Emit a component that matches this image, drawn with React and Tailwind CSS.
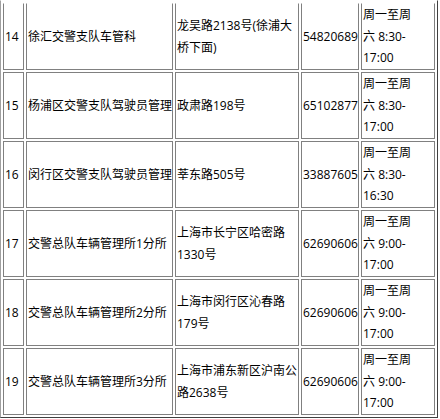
import React from "react";

const rows = [
  { no: "14", name: "徐汇交警支队车管科", addr: ["龙吴路2138号(徐浦大", "桥下面)"], tel: "54820689", time: "8:30-", end: "17:00" },
  { no: "15", name: "杨浦区交警支队驾驶员管理", addr: ["政肃路198号"], tel: "65102877", time: "8:30-", end: "17:00" },
  { no: "16", name: "闵行区交警支队驾驶员管理", addr: ["莘东路505号"], tel: "33887605", time: "8:30-", end: "16:30" },
  { no: "17", name: "交警总队车辆管理所1分所", addr: ["上海市长宁区哈密路", "1330号"], tel: "62690606", time: "9:00-", end: "17:00" },
  { no: "18", name: "交警总队车辆管理所2分所", addr: ["上海市闵行区沁春路", "179号"], tel: "62690606", time: "9:00-", end: "17:00" },
  { no: "19", name: "交警总队车辆管理所3分所", addr: ["上海市浦东新区沪南公", "路2638号"], tel: "62690606", time: "9:00-", end: "17:00" },
];

const Cell = ({ first, className = "", children }) => (
  <td
    className={`border border-[#808080] ${first ? "border-t-transparent" : ""} px-px py-0 align-middle whitespace-nowrap overflow-hidden ${className}`}
  >
    {children}
  </td>
);

export default function App() {
  return (
    <div className="w-[440px] h-[419px] bg-white overflow-hidden">
      <table
        className="table-fixed w-[438px] border-separate border-spacing-[2px] border border-l-[#a0a0a0] border-t-transparent border-r-[#404040] border-b-[#404040] text-[12px] leading-[21.667px] text-black"
        style={{ fontFamily: '"Open Sans", "Noto Sans CJK SC", sans-serif' }}
      >
        <colgroup>
          <col className="w-[21px]" />
          <col className="w-[147px]" />
          <col className="w-[124px]" />
          <col className="w-[58px]" />
          <col className="w-[74px]" />
        </colgroup>
        <tbody>
          {rows.map((r, i) => (
            <tr key={r.no}>
              <Cell first={i === 0}>{r.no}</Cell>
              <Cell first={i === 0}>{r.name}</Cell>
              <Cell first={i === 0}>
                {r.addr.map((line, j) => (
                  <div key={j}>{line}</div>
                ))}
              </Cell>
              <Cell first={i === 0}>{r.tel}</Cell>
              <Cell first={i === 0}>
                <div>周一至周</div>
                <div>六 {r.time}</div>
                <div>{r.end}</div>
              </Cell>
            </tr>
          ))}
        </tbody>
      </table>
    </div>
  );
}
